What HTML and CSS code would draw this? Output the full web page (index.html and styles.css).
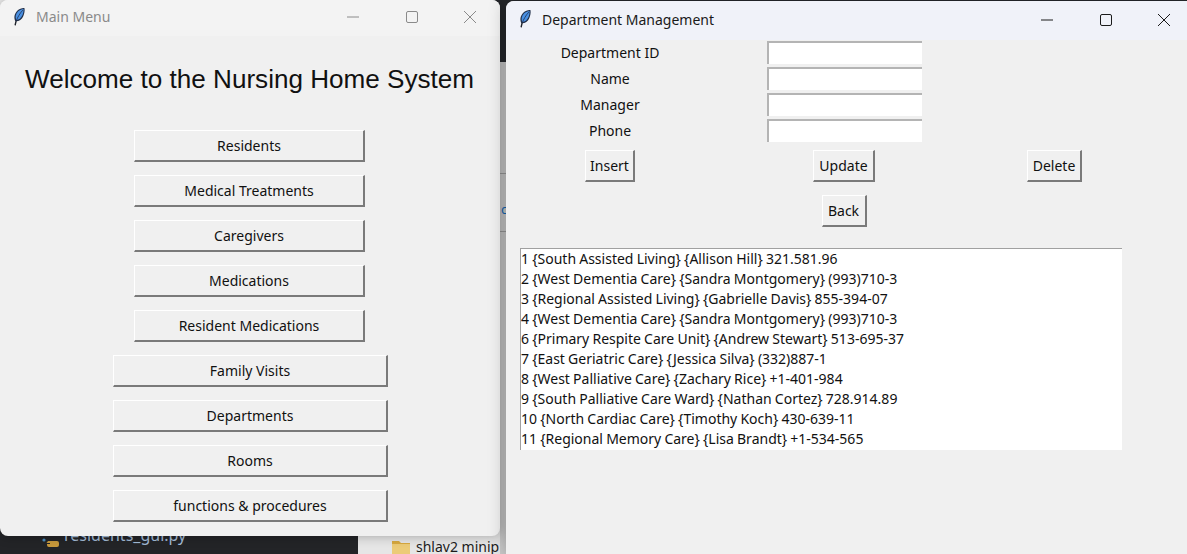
FILE: index.html
```html
<!DOCTYPE html>
<html lang="en">
<head>
<meta charset="utf-8">
<title>Nursing Home System</title>
<link rel="stylesheet" href="styles.css">
</head>
<body>
<svg class="defs" width="0" height="0" aria-hidden="true">
  <symbol id="feather" viewBox="0 0 13 19">
    <path d="M2.4 18.400 L3.600 13.500" stroke="#20242c" stroke-width="1.5" fill="none" stroke-linecap="round"/>
    <path d="M2.600 14.600 C.6 11 1.400 6.400 4.600 3.200 C7 .9 10.200 .1 12.400 .4 C12.900 3.400 12.400 6.600 11 9.400 C9.400 12.600 6.400 15 2.600 14.600 Z" fill="#22304a"/>
    <path d="M3.600 13.200 C2.200 10.600 2.800 6.800 5.400 4.200 C7.200 2.400 9.600 1.600 11.400 1.500 C11.600 3.800 11 6.600 9.900 8.800 C8.600 11.400 6.400 13.400 3.600 13.200 Z" fill="#4a90e2"/>
    <path d="M3.600 14 C5 10.400 7.200 6.400 10.600 2.600" stroke="#1b2a48" stroke-width=".8" fill="none"/>
  </symbol>
</svg>
<div class="desktop">
  <div class="bg-dark-top"></div>
  <div class="bg-strip">
    <span class="strip-line strip-line-a"></span>
    <span class="strip-letter">c</span>
    <span class="strip-line strip-line-b"></span>
  </div>
  <div class="bg-editor">
    <svg class="py-icon" width="18" height="18" viewBox="0 0 18 18" aria-hidden="true">
      <circle cx="2" cy="8" r="1.6" fill="#4b8bbe"/>
      <path d="M6 9h9a2 2 0 0 1 2 2v2a2 2 0 0 1-2 2H7a2 2 0 0 1-2-2v-1h3v-1H4.500z" fill="#c99a3c"/>
    </svg>
    <span class="editor-file">residents_gui.py</span>
  </div>
  <div class="bg-files">
    <svg class="folder" width="18" height="15" viewBox="0 0 18 15" aria-hidden="true">
      <path d="M0 1h7l2 2h9v12H0z" fill="#d8a93f"/>
      <path d="M0 4h18v11H0z" fill="#eccb77"/>
    </svg>
    <span class="file-name">shlav2 minip</span>
  </div>

  <section class="window main-window">
    <header class="titlebar titlebar-inactive">
      <svg class="app-icon"><use href="#feather"/></svg>
      <span class="title-text">Main Menu</span>
      <div class="caption">
        <svg class="cap" viewBox="0 0 12 12"><path d="M0 6h12"/></svg>
        <svg class="cap" viewBox="0 0 12 12"><rect x=".5" y=".5" width="11" height="11" rx="1.5"/></svg>
        <svg class="cap" viewBox="0 0 12 12"><path d="M0 0l12 12M12 0L0 12"/></svg>
      </div>
    </header>
    <div class="menu-body">
      <h1 class="welcome">Welcome to the Nursing Home System</h1>
      <div class="menu-list">
        <button class="btn menu-btn">Residents</button>
        <button class="btn menu-btn">Medical Treatments</button>
        <button class="btn menu-btn">Caregivers</button>
        <button class="btn menu-btn">Medications</button>
        <button class="btn menu-btn">Resident Medications</button>
        <button class="btn menu-btn menu-btn-wide">Family Visits</button>
        <button class="btn menu-btn menu-btn-wide">Departments</button>
        <button class="btn menu-btn menu-btn-wide">Rooms</button>
        <button class="btn menu-btn menu-btn-wide">functions &amp; procedures</button>
      </div>
    </div>
  </section>

  <section class="window dept-window">
    <header class="titlebar titlebar-active">
      <svg class="app-icon"><use href="#feather"/></svg>
      <span class="title-text">Department Management</span>
      <div class="caption">
        <svg class="cap" viewBox="0 0 12 12"><path d="M0 6h12"/></svg>
        <svg class="cap" viewBox="0 0 12 12"><rect x=".5" y=".5" width="11" height="11" rx="1.5"/></svg>
        <svg class="cap" viewBox="0 0 12 12"><path d="M0 0l12 12M12 0L0 12"/></svg>
      </div>
    </header>
    <div class="form-grid">
      <label class="field-label">Department ID</label><input class="entry" type="text"><span></span>
      <label class="field-label">Name</label><input class="entry" type="text"><span></span>
      <label class="field-label">Manager</label><input class="entry" type="text"><span></span>
      <label class="field-label">Phone</label><input class="entry" type="text"><span></span>
      <button class="btn btn-insert">Insert</button>
      <button class="btn btn-update">Update</button>
      <button class="btn btn-delete">Delete</button>
      <span></span>
      <button class="btn btn-back">Back</button>
      <span></span>
    </div>
    <ul class="listbox">
      <li>1 {South Assisted Living} {Allison Hill} 321.581.96</li>
      <li>2 {West Dementia Care} {Sandra Montgomery} (993)710-3</li>
      <li>3 {Regional Assisted Living} {Gabrielle Davis} 855-394-07</li>
      <li>4 {West Dementia Care} {Sandra Montgomery} (993)710-3</li>
      <li>6 {Primary Respite Care Unit} {Andrew Stewart} 513-695-37</li>
      <li>7 {East Geriatric Care} {Jessica Silva} (332)887-1</li>
      <li>8 {West Palliative Care} {Zachary Rice} +1-401-984</li>
      <li>9 {South Palliative Care Ward} {Nathan Cortez} 728.914.89</li>
      <li>10 {North Cardiac Care} {Timothy Koch} 430-639-11</li>
      <li>11 {Regional Memory Care} {Lisa Brandt} +1-534-565</li>
    </ul>
  </section>
</div>
</body>
</html>
```
FILE: styles.css
```css
* { box-sizing: border-box; }
html, body { margin: 0; padding: 0; }
body { width: 1187px; height: 554px; overflow: hidden; font-family: "Noto Sans", "Open Sans", sans-serif; font-size: 14px; color: #111; }
.defs { position: absolute; }

.desktop { position: relative; width: 1187px; height: 554px; overflow: hidden; background: #ececec; }

.bg-dark-top { position: absolute; left: 480px; top: 0; width: 707px; height: 62px; background: #26282c; }
.bg-strip { position: absolute; left: 500px; top: 62px; width: 6px; height: 492px; background: #c9c9c9; }
.strip-line { position: absolute; left: 0; width: 6px; height: 1px; background: #9a9a9a; }
.strip-line-a { top: 111px; }
.strip-line-b { top: 169px; }
.strip-letter { position: absolute; left: 1px; top: 139px; font-size: 13px; line-height: 16px; color: #1368b8; }

.bg-editor { position: absolute; left: 0; top: 520px; width: 358px; height: 34px; background: #232427; }
.py-icon { position: absolute; left: 42px; top: 12px; }
.editor-file { position: absolute; left: 64px; top: 5px; font-size: 16px; line-height: 20px; color: #a3bcd8; }

.bg-files { position: absolute; left: 358px; top: 520px; width: 142px; height: 34px; background: #e6e6e6; }
.folder { position: absolute; left: 34px; top: 20px; }
.file-name { position: absolute; left: 58px; top: 17px; font-size: 14px; line-height: 20px; color: #1c1c1c; white-space: nowrap; }

.window { position: absolute; background: #f0f0f0; overflow: hidden; }
.main-window { left: 0; top: 0; width: 500px; height: 536px; border-radius: 8px; box-shadow: 0 0 12px rgba(0, 0, 0, .3); }
.dept-window { left: 506px; top: 1px; width: 681px; height: 553px; border-top-left-radius: 8px; box-shadow: 0 0 18px rgba(0, 0, 0, .28); }

.titlebar { display: flex; align-items: center; padding-left: 13px; padding-bottom: 2px; }
.titlebar-inactive { height: 36px; padding-bottom: 3px; background: #f3f3f3; color: #8a8a8a; }
.titlebar-active { height: 39px; background: #f0f2f9; color: #1a1a1a; }
.titlebar-active .app-icon { margin-bottom: 2px; }
.app-icon { width: 12px; height: 19px; flex: none; }
.title-text { margin-left: 11px; font-size: 14px; white-space: nowrap; }
.caption { margin-left: auto; display: flex; align-items: center; gap: 46.5px; padding-right: 24px; }
.titlebar-active .caption { padding-right: 17px; }
.cap { width: 12px; height: 12px; fill: none; stroke: currentColor; stroke-width: 1; }

.menu-body { padding-top: 27px; }
.welcome { margin: 0 0 0 25px; font-family: "Liberation Sans", Arial, sans-serif; font-size: 26.1px; font-weight: 400; line-height: 32px; color: #111; white-space: nowrap; }
.menu-list { display: flex; flex-direction: column; align-items: flex-start; gap: 13px; margin-top: 35px; }

.btn { display: block; padding: 0 0 1px; margin: 0; background: #f0f0f0; font: inherit; color: #111; border: 0; border-top: 1px solid #fff; border-left: 1px solid #fff; border-right: 2px solid #7a7a7a; border-bottom: 2px solid #7a7a7a; height: 32px; }
.menu-btn { width: 231px; margin-left: 134px; }
.menu-btn-wide { width: 275px; margin-left: 113px; }

.form-grid { display: grid; grid-template-columns: 208px 260px 161px; grid-template-rows: 26px 26px 26px 26px 44px 46px; justify-items: center; align-items: center; }
.field-label { align-self: start; line-height: 25px; }
.entry { display: block; align-self: start; width: 155px; height: 23px; padding: 0; margin: 1px 0 0; background: #fff; border: 0; border-top: 2px solid #b4b4b4; border-left: 2px solid #b4b4b4; }
.btn-insert { width: 50px; }
.btn-update { width: 62px; }
.btn-delete { width: 55px; }
.btn-back { width: 45px; }
.form-grid > span { display: block; }

.listbox { list-style: none; width: 602px; height: 202px; margin: 14px 0 0 14px; padding: 0; background: #fff; border-top: 1px solid #a0a0a0; border-left: 1px solid #a0a0a0; word-spacing: -0.45px; }
.listbox li { height: 20px; line-height: 20px; white-space: nowrap; overflow: hidden; }
```
